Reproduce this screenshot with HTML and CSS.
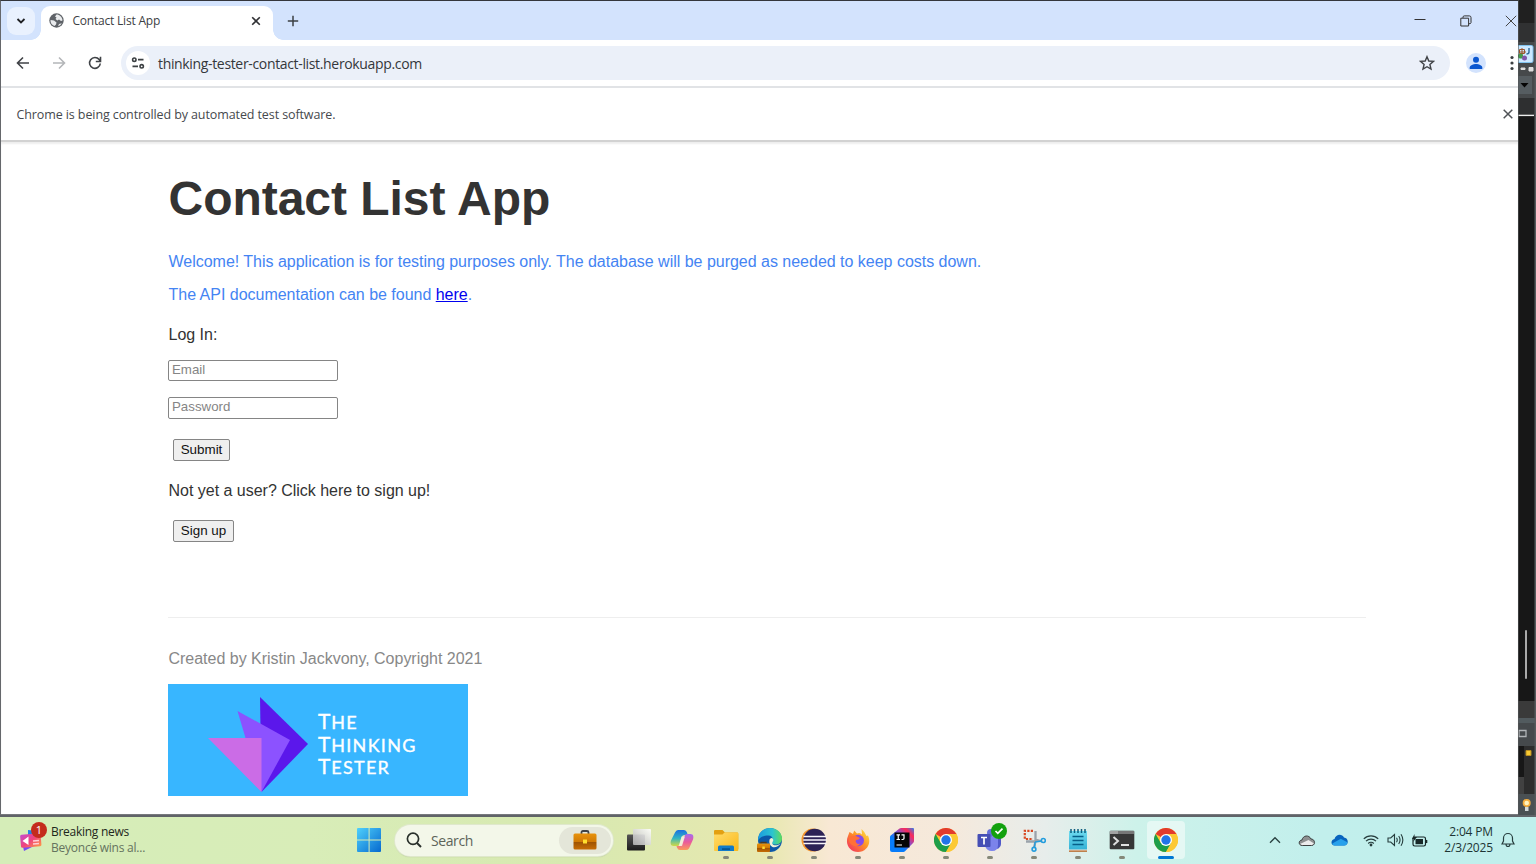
FILE: index.html
```html
<!DOCTYPE html>
<html lang="en">
<head>
<meta charset="utf-8">
<title>Contact List App</title>
<link rel="stylesheet" href="styles.css">
</head>
<body>
<svg class="defs" width="0" height="0" aria-hidden="true">
  <defs>
    <linearGradient id="win" x1="0" y1="0" x2="1" y2="1"><stop offset="0" stop-color="#4fd0fb"/><stop offset="1" stop-color="#0669cf"/></linearGradient>
    <linearGradient id="cop1" x1="0" y1="0" x2="0" y2="1"><stop offset="0" stop-color="#1b6fe0"/><stop offset=".5" stop-color="#2fb3c4"/><stop offset="1" stop-color="#d4d943"/></linearGradient>
    <linearGradient id="cop2" x1="0" y1="0" x2="0" y2="1"><stop offset="0" stop-color="#a66bf0"/><stop offset=".5" stop-color="#ea5a9b"/><stop offset="1" stop-color="#fb9a5a"/></linearGradient>
    <linearGradient id="fold" x1="0" y1="0" x2="1" y2="1"><stop offset="0" stop-color="#ffdc6b"/><stop offset="1" stop-color="#fbb818"/></linearGradient>
    <linearGradient id="edge" x1="0" y1="0" x2="1" y2="0"><stop offset="0" stop-color="#1b9be0"/><stop offset=".6" stop-color="#2cc4cf"/><stop offset="1" stop-color="#5fdc5a"/></linearGradient>
    <linearGradient id="fox" x1="1" y1="0" x2="0" y2="1"><stop offset="0" stop-color="#fff04a"/><stop offset=".45" stop-color="#ff9324"/><stop offset="1" stop-color="#f0246b"/></linearGradient>
    <linearGradient id="ij" x1="0" y1="1" x2="1" y2="0"><stop offset=".35" stop-color="#087cfa"/><stop offset=".55" stop-color="#7a55d8"/><stop offset=".8" stop-color="#fe2857"/><stop offset="1" stop-color="#2d7ff0"/></linearGradient>
    <linearGradient id="case" x1="0" y1="0" x2="0" y2="1"><stop offset="0" stop-color="#e8930c"/><stop offset=".5" stop-color="#d17a05"/><stop offset=".52" stop-color="#9c5203"/><stop offset="1" stop-color="#c76d05"/></linearGradient>
    <linearGradient id="news" x1="0" y1="0" x2="1" y2="1"><stop offset="0" stop-color="#c44bd0"/><stop offset=".5" stop-color="#f0447c"/><stop offset="1" stop-color="#ff9a45"/></linearGradient>
    <linearGradient id="note" x1="0" y1="0" x2="0" y2="1"><stop offset="0" stop-color="#6fdcf0"/><stop offset="1" stop-color="#35b2d6"/></linearGradient>
    <linearGradient id="dark" x1="0" y1="0" x2="0" y2="1"><stop offset="0" stop-color="#555"/><stop offset="1" stop-color="#1c1c1c"/></linearGradient>
    <linearGradient id="lite" x1="1" y1="0" x2="0" y2="1"><stop offset="0" stop-color="#fff"/><stop offset="1" stop-color="#b5b5b5"/></linearGradient>
    <symbol id="chrome" viewBox="0 0 24 24">
      <circle cx="12" cy="12" r="12" fill="#fcc934"/>
      <path d="M12 12 1.6 6A12 12 0 0 1 22.4 6Z" fill="#e33b2e"/>
      <path d="M12 12 6.8 15 1.6 6A12 12 0 0 0 12 24L17.2 15Z" fill="#1e9e4a"/>
      <path d="M12 6h10.4A12 12 0 0 1 12 24l5.2-9Z" fill="#fcc934"/>
      <circle cx="12" cy="12" r="6" fill="#fff"/><circle cx="12" cy="12" r="4.7" fill="#2374e8"/>
    </symbol>
  </defs>
</svg>
<div class="screen">
  <div class="upper">
    <div class="browser">
      <div class="tabs">
        <div class="tab-search"><svg width="10" height="8" viewBox="0 0 10 8"><path d="M1.500 2 5 5.500 8.500 2" fill="none" stroke="#202124" stroke-width="1.800"/></svg></div>
        <div class="tab">
          <svg class="globe" width="15" height="15" viewBox="0 0 15 15"><circle cx="7.500" cy="7.500" r="7.200" fill="#5f6368"/><path d="M7.500 1.500C10 1.300 13.500 4 13.500 7.500L12 8 10 6.500 8.300 7.400 6.500 6 7.500 4.500 6 3.500ZM1.500 7 5 7.500 7.500 9.500 7 11.500 5.500 13A6 6 0 0 1 1.500 7ZM9 13.300 10 11 12.800 10.200A6 6 0 0 1 9 13.300Z" fill="#e9ebed"/></svg>
          <span class="tab-title">Contact List App</span>
          <svg class="tab-close" width="10" height="10" viewBox="0 0 10 10"><path d="m1.200 1.200 7.600 7.600m0-7.600L1.200 8.800" stroke="#303134" stroke-width="1.600"/></svg>
        </div>
        <svg class="new-tab" width="12" height="12" viewBox="0 0 12 12"><path d="M6 .8v10.400M.8 6h10.400" stroke="#3c4043" stroke-width="1.500"/></svg>
        <div class="controls">
          <svg width="12" height="12" viewBox="0 0 12 12"><path d="M.5 4.500h11" stroke="#333"/></svg>
          <svg width="12" height="12" viewBox="0 0 12 12"><path d="M.8 3.200h7.800v7.800H.8ZM3 3V2.200Q3 .9 4.300.9h5Q11 .9 11 2.600v5Q11 8.800 9 8.800" fill="none" stroke="#333"/></svg>
          <svg width="12" height="12" viewBox="0 0 12 12"><path d="m.8.800 10.400 10.400m0-10.400L.8 11.200" stroke="#444"/></svg>
        </div>
      </div>
      <div class="toolbar">
        <svg width="14" height="14" viewBox="0 0 14 14"><path d="M13 7H2M7 1.500 1.500 7 7 12.500" fill="none" stroke="#404347" stroke-width="1.600"/></svg>
        <svg width="14" height="14" viewBox="0 0 14 14"><path d="M1 7h11M7 1.500 12.500 7 7 12.500" fill="none" stroke="#b4b6b9" stroke-width="1.600"/></svg>
        <svg width="14" height="14" viewBox="0 0 14 14"><path d="M12.300 7.500A5.400 5.400 0 1 1 11.200 3.600L12.300 5M12.500.8v4.700H7.800" fill="none" stroke="#404347" stroke-width="1.600"/></svg>
        <div class="address">
          <div class="site"><svg width="14" height="12" viewBox="0 0 14 12"><path d="M7 2.700h5.500M1.500 9.300H7" stroke="#3c4043" stroke-width="1.700"/><circle cx="3.300" cy="2.700" r="1.700" fill="none" stroke="#3c4043" stroke-width="1.600"/><circle cx="10.700" cy="9.300" r="1.700" fill="none" stroke="#3c4043" stroke-width="1.600"/></svg></div>
          <span class="url">thinking-tester-contact-list.herokuapp.com</span>
          <svg class="star" width="16" height="16" viewBox="0 0 16 16"><path d="m8 1.700 1.800 4.300 4.700.4-3.600 3.100 1.100 4.600L8 11.700 4 14.100l1.100-4.600L1.500 6.400 6.200 6Z" fill="none" stroke="#404347" stroke-width="1.400"/></svg>
        </div>
        <svg class="avatar" width="20" height="20" viewBox="0 0 20 20"><circle cx="10" cy="10" r="10" fill="#d3e3fd"/><circle cx="10" cy="6.800" r="3" fill="#0b57d0"/><path d="M3.700 16v-1.500C3.700 12.300 7.500 11 10 11s6.300 1.300 6.300 3.500V16Z" fill="#0b57d0"/></svg>
        <svg class="dots" width="4" height="16" viewBox="0 0 4 16"><g fill="#3c4043"><circle cx="2" cy="2.500" r="1.600"/><circle cx="2" cy="8" r="1.600"/><circle cx="2" cy="13.500" r="1.600"/></g></svg>
      </div>
      <div class="infobar">
        <span class="info-text">Chrome is being controlled by automated test software.</span>
        <svg width="10" height="10" viewBox="0 0 10 10"><path d="m.7.700 8.600 8.600m0-8.600L.7 9.300" stroke="#505357" stroke-width="1.500"/></svg>
      </div>
      <main class="page">
        <h1 class="title">Contact List App</h1>
        <p class="line welcome"><span>Welcome! This application is for testing purposes only. The database will be purged as needed to keep costs down.</span></p>
        <p class="line api"><span>The API documentation can be found <a class="link" href="#">here</a>.</span></p>
        <p class="line login">Log In:</p>
        <input class="field email" type="text" placeholder="Email">
        <input class="field password" type="password" placeholder="Password">
        <button class="button submit">Submit</button>
        <p class="line signup-text">Not yet a user? Click here to sign up!</p>
        <button class="button signup">Sign up</button>
        <footer class="footer">
          <p class="line credit">Created by Kristin Jackvony, Copyright 2021</p>
          <div class="logo">
            <svg class="logo-mark" width="100" height="96" viewBox="208 697 100 96"><path d="M260 697 308 744 261.500 792Z" fill="#5b17eb"/><path d="m237.500 711 52.500 29-28.500 52-16-54Z" fill="#8c52ff"/><path d="M208 738h53.500v54Z" fill="#cb6ce6"/></svg>
            <div class="logo-text"><span>T<small>HE</small></span><span>T<small>HINKING</small></span><span>T<small>ESTER</small></span></div>
          </div>
        </footer>
      </main>
    </div>
    <svg class="behind" width="18" height="815" viewBox="0 0 18 815">
      <path fill="#171717" d="M0 0h18v815H0Z"/><path fill="#202020" d="M0 0h18v23H0Z"/><path fill="#303132" d="M0 23h18v19H0Z"/>
      <path fill="#46494b" d="M0 42h18v56H0Z"/>
      <rect x="-3" y="45.500" width="18" height="17" rx="1.500" fill="#cce8ff" stroke="#82c3ee"/>
      <path d="M1.500 49.500h5v4h-5ZM4 48v7M1 52h7" stroke="#9b552d" fill="none"/><path d="M11 48v4q0 2-2.500 2" fill="none" stroke="#2e6999" stroke-width="1.400"/><circle cx="2.500" cy="56" r="2.600" fill="#459b4e"/><circle cx="6.500" cy="58" r="2.500" fill="#8056ab"/>
      <path d="M3 68h4v1.500H3ZM11 67.500h4v3.500h-4Z" fill="#ddd" stroke="#ddd"/>
      <path fill="#565d61" d="M0 76h14v18H0Z"/><path d="M2.500 83h8L6.500 87.500Z" fill="#050505"/>
      <path fill="#2e2f30" d="M0 98h18v17H0Z"/><path fill="#eee" d="M0 114.700h16v1.400H0Z"/>
      <rect x="7" y="630" width="2" height="49" rx="1" fill="#aaa"/>
      <path fill="#3a3a3a" d="M0 701h18v17H0Z"/><path fill="#525b5f" d="M0 718h18v5H0Z"/><path fill="#45494c" d="M0 723h18v23H0Z"/>
      <path d="M1 730.500h7v6H1Z" fill="none" stroke="#b0b4b7" stroke-width="1.300"/>
      <path fill="#2d2d2d" d="M0 746h18v48H0Z"/><path fill="#171717" d="M0 746h6v31H0Z"/><path fill="#414141" d="M0 777h6v17H0Z"/>
      <path fill="#f8ca32" stroke="#b78d21" d="M8 750.500h5v5H8Z"/>
      <path fill="#4a5053" d="M0 794h18v21H0Z"/><circle cx="8.700" cy="803" r="4" fill="#f5ae3e"/><circle cx="8.700" cy="803" r="2.300" fill="#fff3bd"/><path fill="#d2d8d8" d="M7 807h3.500v4H7Z"/>
      <path fill="#555a5c" d="M16.500 0H18v815h-1.500Z"/><path fill="#55585a" d="M0 0h.6v815H0Z"/>
    </svg>
  </div>
  <div class="taskbar">
    <div class="widget">
      <div class="news-icon">
        <svg width="24" height="24" viewBox="0 0 24 24"><path d="m9 2 10 1v10H9Z" fill="#2384e5"/><path d="m2 10 15 7-12 6Z" fill="#784cf2"/><rect x="1.500" y="6" width="20.500" height="13" rx="1.500" fill="url(#news)" transform="rotate(-5 12 12)"/><path d="m3.500 13 6-4.500v8.500Z" fill="#fff"/><path d="m14 13 6-.5M14 16l6-.5" stroke="#ffd0d9" stroke-width="1.400"/></svg>
        <span class="badge">1</span>
      </div>
      <div class="news-text"><span class="headline">Breaking news</span><span class="story">Beyoncé wins al...</span></div>
    </div>
    <svg class="start" width="24" height="24" viewBox="0 0 24 24"><path d="M1 0h10.600v11.500H0V1Q0 0 1 0Zm11.600 0H23q1 0 1 1v10.500H12.600ZM0 12.500h11.600V24H1q-1 0-1-1Zm12.600 0H24V23q0 1-1 1H12.600Z" fill="url(#win)"/></svg>
    <div class="search">
      <svg width="16" height="16" viewBox="0 0 16 16"><circle cx="7" cy="6.800" r="5.600" fill="none" stroke="#29302b" stroke-width="1.700"/><path d="m11 11 4 4" stroke="#29302b" stroke-width="2"/></svg>
      <span class="search-label">Search</span>
      <div class="briefcase"><svg width="24" height="20" viewBox="0 0 24 20"><path d="M8.500 4V2.500Q8.500 1 10 1h4q1.500 0 1.500 1.500V4" fill="none" stroke="#404346" stroke-width="1.800"/><rect x=".5" y="3.500" width="23" height="16" rx="1.500" fill="url(#case)"/><path d="M10 9.500h4v4h-4Z" fill="#ffdf2e"/></svg></div>
    </div>
    <div class="apps">
      <div class="app"><svg width="26" height="24" viewBox="0 0 26 24"><rect x="2" y="6.500" width="18" height="16" rx="1" fill="url(#dark)"/><rect x="8" y="1" width="18" height="16" rx="1" fill="url(#lite)" opacity=".9"/></svg></div>
      <div class="app"><svg width="24" height="24" viewBox="0 0 24 24"><path d="M5 4.500Q6 2 8 2h6q2.200 0 3 2.500l.7 2.500h-3.200q-2 0-2.700 2l-2.200 7Q9 18.500 7 18H3.500C.5 18 .2 15 1 12.500Z" fill="url(#cop1)"/><path d="M19 20.500Q18 22 16 22h-6q-2.200 0-3-2.500L6.500 18h3q2 0 2.700-2.500L14.500 8q.6-2 2.500-2h3.500c3 0 3.300 3 2.500 5.500Z" fill="url(#cop2)"/><path d="M11.500 8.500h3.500L12 18H8.800Z" fill="#f4f0df" opacity=".85"/></svg></div>
      <div class="app"><svg width="26" height="24" viewBox="0 0 26 24"><path d="M1 3q0-1 1.200-1h7.300l2.500 2.500H24q1.300 0 1.300 1.300V21H1Z" fill="#e3a011"/><path d="M1 6.500h8.500l2-2H24q1.300 0 1.300 1.300V22q0 1-1 1H2q-1 0-1-1Z" fill="url(#fold)"/><path d="M5 23v-4q0-1.500 1.500-1.500h13Q21 17.500 21 19v4Z" fill="#127bc9"/><path d="M9 20.200h8V22H9Z" fill="#075594"/></svg><i class="run"></i></div>
      <div class="app"><svg width="26" height="26" viewBox="0 0 26 26"><circle cx="13" cy="13" r="12" fill="#0c58a8"/><path d="M1 14C1 4 8 1 13 1c8 0 12 6 12 10.500 0 4-3 6-7 6-3 0-3.500-1.500-2.500-3C17 12 15 8.500 11.500 8.500 6 8.500 2 11 1 14Z" fill="url(#edge)"/><path d="M12.500 12.500q3-3 3.800.5c.2 1.500-1.800 2.500-.8 4s5 2 8.500-.5Q20 21 15.500 20q-4-2-3-7.500Z" fill="#eef1d8"/><path d="M4 17v-1.500h5V17" fill="none" stroke="#493a24" stroke-width="1.400"/><rect y="16.500" width="13" height="8.500" rx="1" fill="url(#case)"/><path d="M5.300 19.500h2.500V22H5.300Z" fill="#ffd72e"/></svg><i class="run"></i></div>
      <div class="app"><svg width="26" height="24" viewBox="0 0 26 24"><circle cx="12" cy="12" r="11.500" fill="#f4942a"/><circle cx="13.700" cy="12" r="11.200" fill="#2c2255"/><path d="M2.500 8.500h23M2.200 12h23.600M2.500 15.500h23" stroke="#f7f5fb" stroke-width="1.400"/></svg><i class="run"></i></div>
      <div class="app"><svg width="24" height="24" viewBox="0 0 24 24"><path d="M2 8 3.500 4 7 6 8.200 2.500 11 5.500Q14 4 16 6.500L15.500 1Q19 4 20.500 8L22 7.500C26 16 20 24 12 24 4 24-1.500 16 2 8Z" fill="url(#fox)"/><circle cx="12.200" cy="12.500" r="5.800" fill="#854ce8"/><path d="M3 10q4-4 8-1.500L14 10q-1 2-4 2-1 1.500.5 3t4 .5q-3 4-7.500 2T3 10Z" fill="#ff7037"/></svg><i class="run"></i></div>
      <div class="app"><svg width="24" height="24" viewBox="0 0 24 24"><path d="M0 9q0-1 1-1.800L9.500.6Q10.300 0 11 0h12q1 0 1 1v12q0 1-.7 1.700L15 23.300Q14.300 24 13.500 24H2q-2 0-2-2Z" fill="url(#ij)"/><path d="M4.500 4.500h15v15h-15Z" fill="#050505"/><path d="M6.500 6.800h3.500M8.250 7v4.500M6.500 11.500H10M11.500 6.800H14v3.500q0 1.300-2.500 1.200M6.500 17H12" fill="none" stroke="#fff" stroke-width="1.200"/></svg><i class="run"></i></div>
      <div class="app"><svg width="24" height="24"><use href="#chrome"/></svg><i class="run"></i></div>
      <div class="app"><svg width="26" height="24" viewBox="0 0 26 24"><circle cx="14" cy="5" r="4" fill="#6670d8"/><path d="M17 9h7v7a4.500 4.500 0 0 1-7 4Z" fill="#5059c9"/><path d="M8 9h13v8q0 6-6 6t-7-6Z" fill="#7b83eb"/><rect x=".5" y="6" width="13" height="13" rx="1" fill="#454eb5"/><path d="M4 9.500h6M7 9.500v7" stroke="#fff" stroke-width="1.700"/></svg><span class="check"><svg width="10" height="8" viewBox="0 0 10 8"><path d="m1.500 4 2.300 2.300L8.500 1.700" fill="none" stroke="#fff" stroke-width="1.700"/></svg></span><i class="run"></i></div>
      <div class="app"><svg width="24" height="24" viewBox="0 0 24 24"><path d="M11 2.800H2.800V11H11" fill="none" stroke="#d84923" stroke-width="2.200" stroke-dasharray="2.200 1.300"/><path d="M13.500 3v8.500L20 13.500M4 13.500h9.500L12 19.500" fill="none" stroke="#9aa3ab" stroke-width="2.300"/><circle cx="21.300" cy="12.500" r="2" fill="none" stroke="#239ddd" stroke-width="1.600"/><circle cx="12" cy="21.300" r="1.900" fill="none" stroke="#239ddd" stroke-width="1.600"/><path d="m13 14 7-1m-7 1-.5 6" stroke="#239ddd" stroke-width="1.400"/></svg><i class="run"></i></div>
      <div class="app"><svg width="20" height="25" viewBox="0 0 20 25"><path d="M1 20.500h18v3.300H1Z" fill="#b66525"/><path d="M1 21h18v1.500H1Z" fill="#f3e9dc"/><rect x="1" y="3" width="18" height="18.500" fill="url(#note)"/><path d="M3 1v4M6.500 1v4M10 1v4M13.500 1v4M17 1v4" stroke="#0d5d7e" stroke-width="1.500"/><path d="M4.500 8.500h11M4.500 12.500h11M4.500 16.500h11" stroke="#075f88" stroke-width="1.400"/></svg><i class="run"></i></div>
      <div class="app"><svg width="26" height="20" viewBox="0 0 26 20"><rect x=".7" y=".7" width="24.600" height="18.600" rx="1" fill="#373737"/><path d="M1 1h24v3H1Z" fill="#777"/><path d="M1 1h8v3H1Z" fill="#a2a2a2"/><path d="m4.500 7 4.500 4-4.500 4" fill="none" stroke="#ddd" stroke-width="2"/><path d="M12 15h8" stroke="#fff" stroke-width="1.700"/></svg><i class="run"></i></div>
      <div class="app active"><svg width="24" height="24"><use href="#chrome"/></svg><i class="run"></i></div>
    </div>
    <div class="tray">
      <svg class="up" width="12" height="8" viewBox="0 0 12 8"><path d="m1 6.700 5-5 5 5" fill="none" stroke="#29403f" stroke-width="1.300"/></svg>
      <svg class="cloud1" width="18" height="13" viewBox="0 0 18 13"><path d="M4.300 11.500C.2 11.500.2 6.300 4 6 5 1.200 11 .5 13 5c4.500.2 4.800 6.500.5 6.500Z" fill="#8e9091"/><path d="m2 10 8.500-4 5.500 3.500q-.5 2-2.500 2H4q-1.500 0-2-1.500Z" fill="#ececec"/><path d="M4.300 11.500C.2 11.500.2 6.300 4 6 5 1.200 11 .5 13 5c4.500.2 4.800 6.500.5 6.500Z" fill="none" stroke="#3d4041"/></svg>
      <svg class="cloud2" width="17" height="12" viewBox="0 0 17 12"><path d="M3.500 11.500C-.5 11.500-.5 5.500 3.500 5c1-5 7.500-6 9.500-1.500 4.500 0 5.500 8 0 8Z" fill="#0864be"/><path d="m1.300 9.500 8.500-4.800 6.500 3.600q-.3 3.200-3.300 3.200H3.500q-1.700 0-2.200-2Z" fill="#27a0eb"/></svg>
      <svg class="wifi" width="16" height="13" viewBox="0 0 16 13"><path d="M.8 4.800a10.200 10.200 0 0 1 14.400 0M3 7.200a7 7 0 0 1 10 0M5.200 9.500a4 4 0 0 1 5.600 0" fill="none" stroke="#263d3d" stroke-width="1.200"/><circle cx="8" cy="11" r="1.400" fill="#263d3d"/></svg>
      <svg class="sound" width="17" height="14" viewBox="0 0 17 14"><path d="M1 5h2.700L7.500 1.500v11L3.700 9H1ZM9.500 4.700q1.500 2.300 0 4.600M11.700 3q2.700 4 0 8M14 1.300q3.700 5.700 0 11.400" fill="none" stroke="#263d3d" stroke-width="1.100"/></svg>
      <svg class="battery" width="17" height="13" viewBox="0 0 17 13"><rect x="2" y="3" width="12.500" height="9" rx="1.700" fill="none" stroke="#172727" stroke-width="1.200"/><path d="M4.500 5h7.500v5.200H4.500Z" fill="#172727"/><path d="M15 6h1.300v3H15ZM3.500 0 1 5h2L2 8l4-5H3.500Z" fill="#172727"/></svg>
      <div class="clock"><span class="time">2:04 PM</span><span class="date">2/3/2025</span></div>
      <svg class="bell" width="14" height="16" viewBox="0 0 14 16"><path d="M1 12 2.500 9V6a4.500 4.500 0 0 1 9 0v3L13 12ZM5 12q0 2.500 2 2.500T9 12" fill="none" stroke="#263d3d" stroke-width="1.200"/></svg>
    </div>
  </div>
</div>
</body>
</html>
```

FILE: styles.css
```css
* { box-sizing: border-box; }
body { margin: 0; font-family: "Open Sans", "Noto Sans", sans-serif; overflow: hidden; }
.defs { display: block; height: 0; }
svg { display: block; flex: none; }
.screen { width: 1536px; height: 864px; display: flex; flex-direction: column; }
.upper { display: flex; height: 815px; background: #171717; }
.browser { width: 1518px; height: 815px; overflow: hidden; background: #fff; border-top: 1px solid #34363c; border-left: 1px solid #65676b; border-bottom: 1px solid #77797d; display: flex; flex-direction: column; }

/* tab strip */
.tabs { height: 39px; flex: none; background: #d3e3fd; display: flex; align-items: center; padding-left: 6px; }
.tab-search { width: 28px; height: 28px; border-radius: 9px; background: #e9f1fe; display: flex; align-items: center; justify-content: center; }
.tab { position: relative; align-self: flex-end; width: 232px; height: 34px; margin-left: 6px; padding: 0 12px 5px 8px; background: #fff; border-radius: 9px 9px 0 0; display: flex; align-items: center; }
.tab::before, .tab::after { content: ""; position: absolute; bottom: 0; width: 10px; height: 10px; }
.tab::before { left: -10px; background: radial-gradient(circle at 0 0, transparent 9.500px, #fff 10px); }
.tab::after { right: -10px; background: radial-gradient(circle at 100% 0, transparent 9.500px, #fff 10px); }
.tab-title { margin-left: 8.500px; font-size: 12px; letter-spacing: -.21px; color: #3c4043; white-space: nowrap; }
.tab-close { margin-left: auto; }
.new-tab { margin-left: 14px; }
.controls { margin-left: auto; width: 103px; flex: none; display: flex; justify-content: space-between; margin-right: 1px; }

/* toolbar */
.toolbar { height: 48px; flex: none; border-bottom: 2px solid #e1e3e6; display: flex; align-items: center; gap: 22px; padding: 0 3px 0 15px; }
.address { height: 34px; width: 1329px; margin-left: -3px; flex: none; border-radius: 17px; background: #ebf0f9; display: flex; align-items: center; padding: 0 15px 0 5px; }
.site { width: 24px; height: 24px; border-radius: 50%; background: #fff; display: flex; align-items: center; justify-content: center; }
.url { margin-left: 8px; font-size: 14px; line-height: 20px; letter-spacing: -.34px; color: #34373b; padding-top: 2px; }
.star { margin-left: auto; }
.avatar { margin-left: -6px; }
.dots { margin-left: 2px; }
.infobar { height: 52px; flex: none; display: flex; align-items: center; justify-content: space-between; padding: 0 5px 0 15.500px; }
.info-text { font-size: 12.500px; letter-spacing: -.1px; color: #46494d; padding-top: 1px; }

/* page */
.page { border-top: 2px solid #d2d2d2; box-shadow: inset 0 2px 2px #eee; padding: 27px 152px 0 167px; flex: 1; display: flex; flex-direction: column; align-items: flex-start; font-family: "Liberation Sans", Arial, sans-serif; font-size: 16px; color: #333; }
.title { margin: 0 0 0 .5px; height: 60px; line-height: 60px; font-size: 48px; letter-spacing: -.03px; white-space: nowrap; }
.line { margin: 0 0 0 .5px; height: 20px; line-height: 20px; letter-spacing: -.015px; white-space: nowrap; }
.welcome { margin-top: 23px; color: #4484f3; }
.api { margin-top: 13px; color: #4484f3; }
.link { color: #0000ee; }
.login { margin-top: 20px; }
.field { width: 170px; height: 21px; border: 1px solid #858585; border-radius: 2px; padding: 0 3px 2px; font: 13.300px "Liberation Sans", Arial, sans-serif; background: #fff; }
.field::placeholder { color: #858585; }
.email { margin-top: 15px; }
.password { margin-top: 16px; height: 22px; padding-bottom: 3px; }
.button { height: 22px; margin-left: 5px; padding: 0 0 2px; border: 1px solid #858585; border-radius: 2px; background: #efefef; color: #111; font: 13.400px "Liberation Sans", Arial, sans-serif; }
.submit { margin-top: 20px; width: 57px; }
.signup-text { margin-top: 20px; }
.signup { margin-top: 19px; width: 61px; }
.footer { align-self: stretch; margin-top: 75px; border-top: 1px solid #eee; padding-top: 31px; }
.credit { color: #888; }
.logo { margin-top: 15px; width: 300px; height: 112px; background: #38b6ff; display: flex; padding: 13px 0 0 40px; }
.logo-text { display: flex; flex-direction: column; margin: 13px 0 0 10px; color: #fff; font: 21px/22.500px Lato, sans-serif; letter-spacing: .8px; -webkit-text-stroke: .35px #fff; }
.logo-text span { height: 22.500px; white-space: nowrap; }
.logo-text small { font-size: 18px; letter-spacing: 1.300px; line-height: 1; }

/* taskbar */
.taskbar { height: 49px; border-top: 2px solid #606368; background: linear-gradient(90deg, #d5edb8 0, #d8edb8 20%, #d7e9b0 37%, #e8e8b0 50%, #f8e8d4 54%, #f5e9dc 62%, #e7edeb 68%, #cdf2ea 74%, #c2efec 86%, #c0efec 100%); display: flex; align-items: center; padding-bottom: 1px; }
.widget { width: 357px; flex: none; padding-left: 19px; display: flex; align-items: center; }
.news-icon { position: relative; }
.badge { position: absolute; left: 12px; top: -6px; width: 16px; height: 16px; border-radius: 50%; background: #c42b1c; color: #fff; font-size: 11px; line-height: 16px; text-align: center; }
.news-text { margin-left: 8px; display: flex; flex-direction: column; font-size: 12px; line-height: 16px; white-space: nowrap; }
.headline { color: #1d271b; letter-spacing: -.27px; }
.story { color: #65735e; letter-spacing: -.24px; }
.search { width: 218px; height: 31px; margin-left: 14px; flex: none; border-radius: 16px; background: #f3f7e9; box-shadow: 0 0 0 1px #dfe8cc, 0 1px 1px #a9b88d; display: flex; align-items: center; padding: 0 2px 0 11px; }
.search-label { margin-left: 9px; font-size: 14px; letter-spacing: -.4px; color: #5d6459; }
.briefcase { margin-left: auto; width: 52px; height: 27px; border-radius: 14px; background: #e4e6d9; display: flex; align-items: center; justify-content: center; }
.apps { display: flex; margin-left: 2.500px; }
.app { position: relative; width: 44.040px; height: 47px; display: flex; align-items: center; justify-content: center; }
.run { position: absolute; bottom: 5px; left: 19px; width: 6px; height: 3px; border-radius: 2px; background: #858878; }
.check { position: absolute; left: 23px; top: 6px; width: 16px; height: 16px; border-radius: 50%; background: #13a10e; display: flex; align-items: center; justify-content: center; }
.active::before { content: ""; position: absolute; left: 3px; top: 4px; width: 38px; height: 38px; border-radius: 4px; background: #e5f8f4; }
.active svg { position: relative; }
.active .run { width: 16px; left: 14px; background: #0078d4; }
.tray { margin-left: auto; padding-right: 21px; display: flex; align-items: center; }
.cloud1 { margin-left: 17px; }
.cloud2 { margin-left: 15px; }
.wifi { margin-left: 15px; }
.sound { margin-left: 8px; }
.battery { margin-left: 7px; }
.clock { margin-left: 12px; width: 53px; display: flex; flex-direction: column; align-items: flex-end; font-size: 12px; line-height: 16px; letter-spacing: -.15px; color: #1d3534; white-space: nowrap; }
.bell { margin-left: 8px; }
```
